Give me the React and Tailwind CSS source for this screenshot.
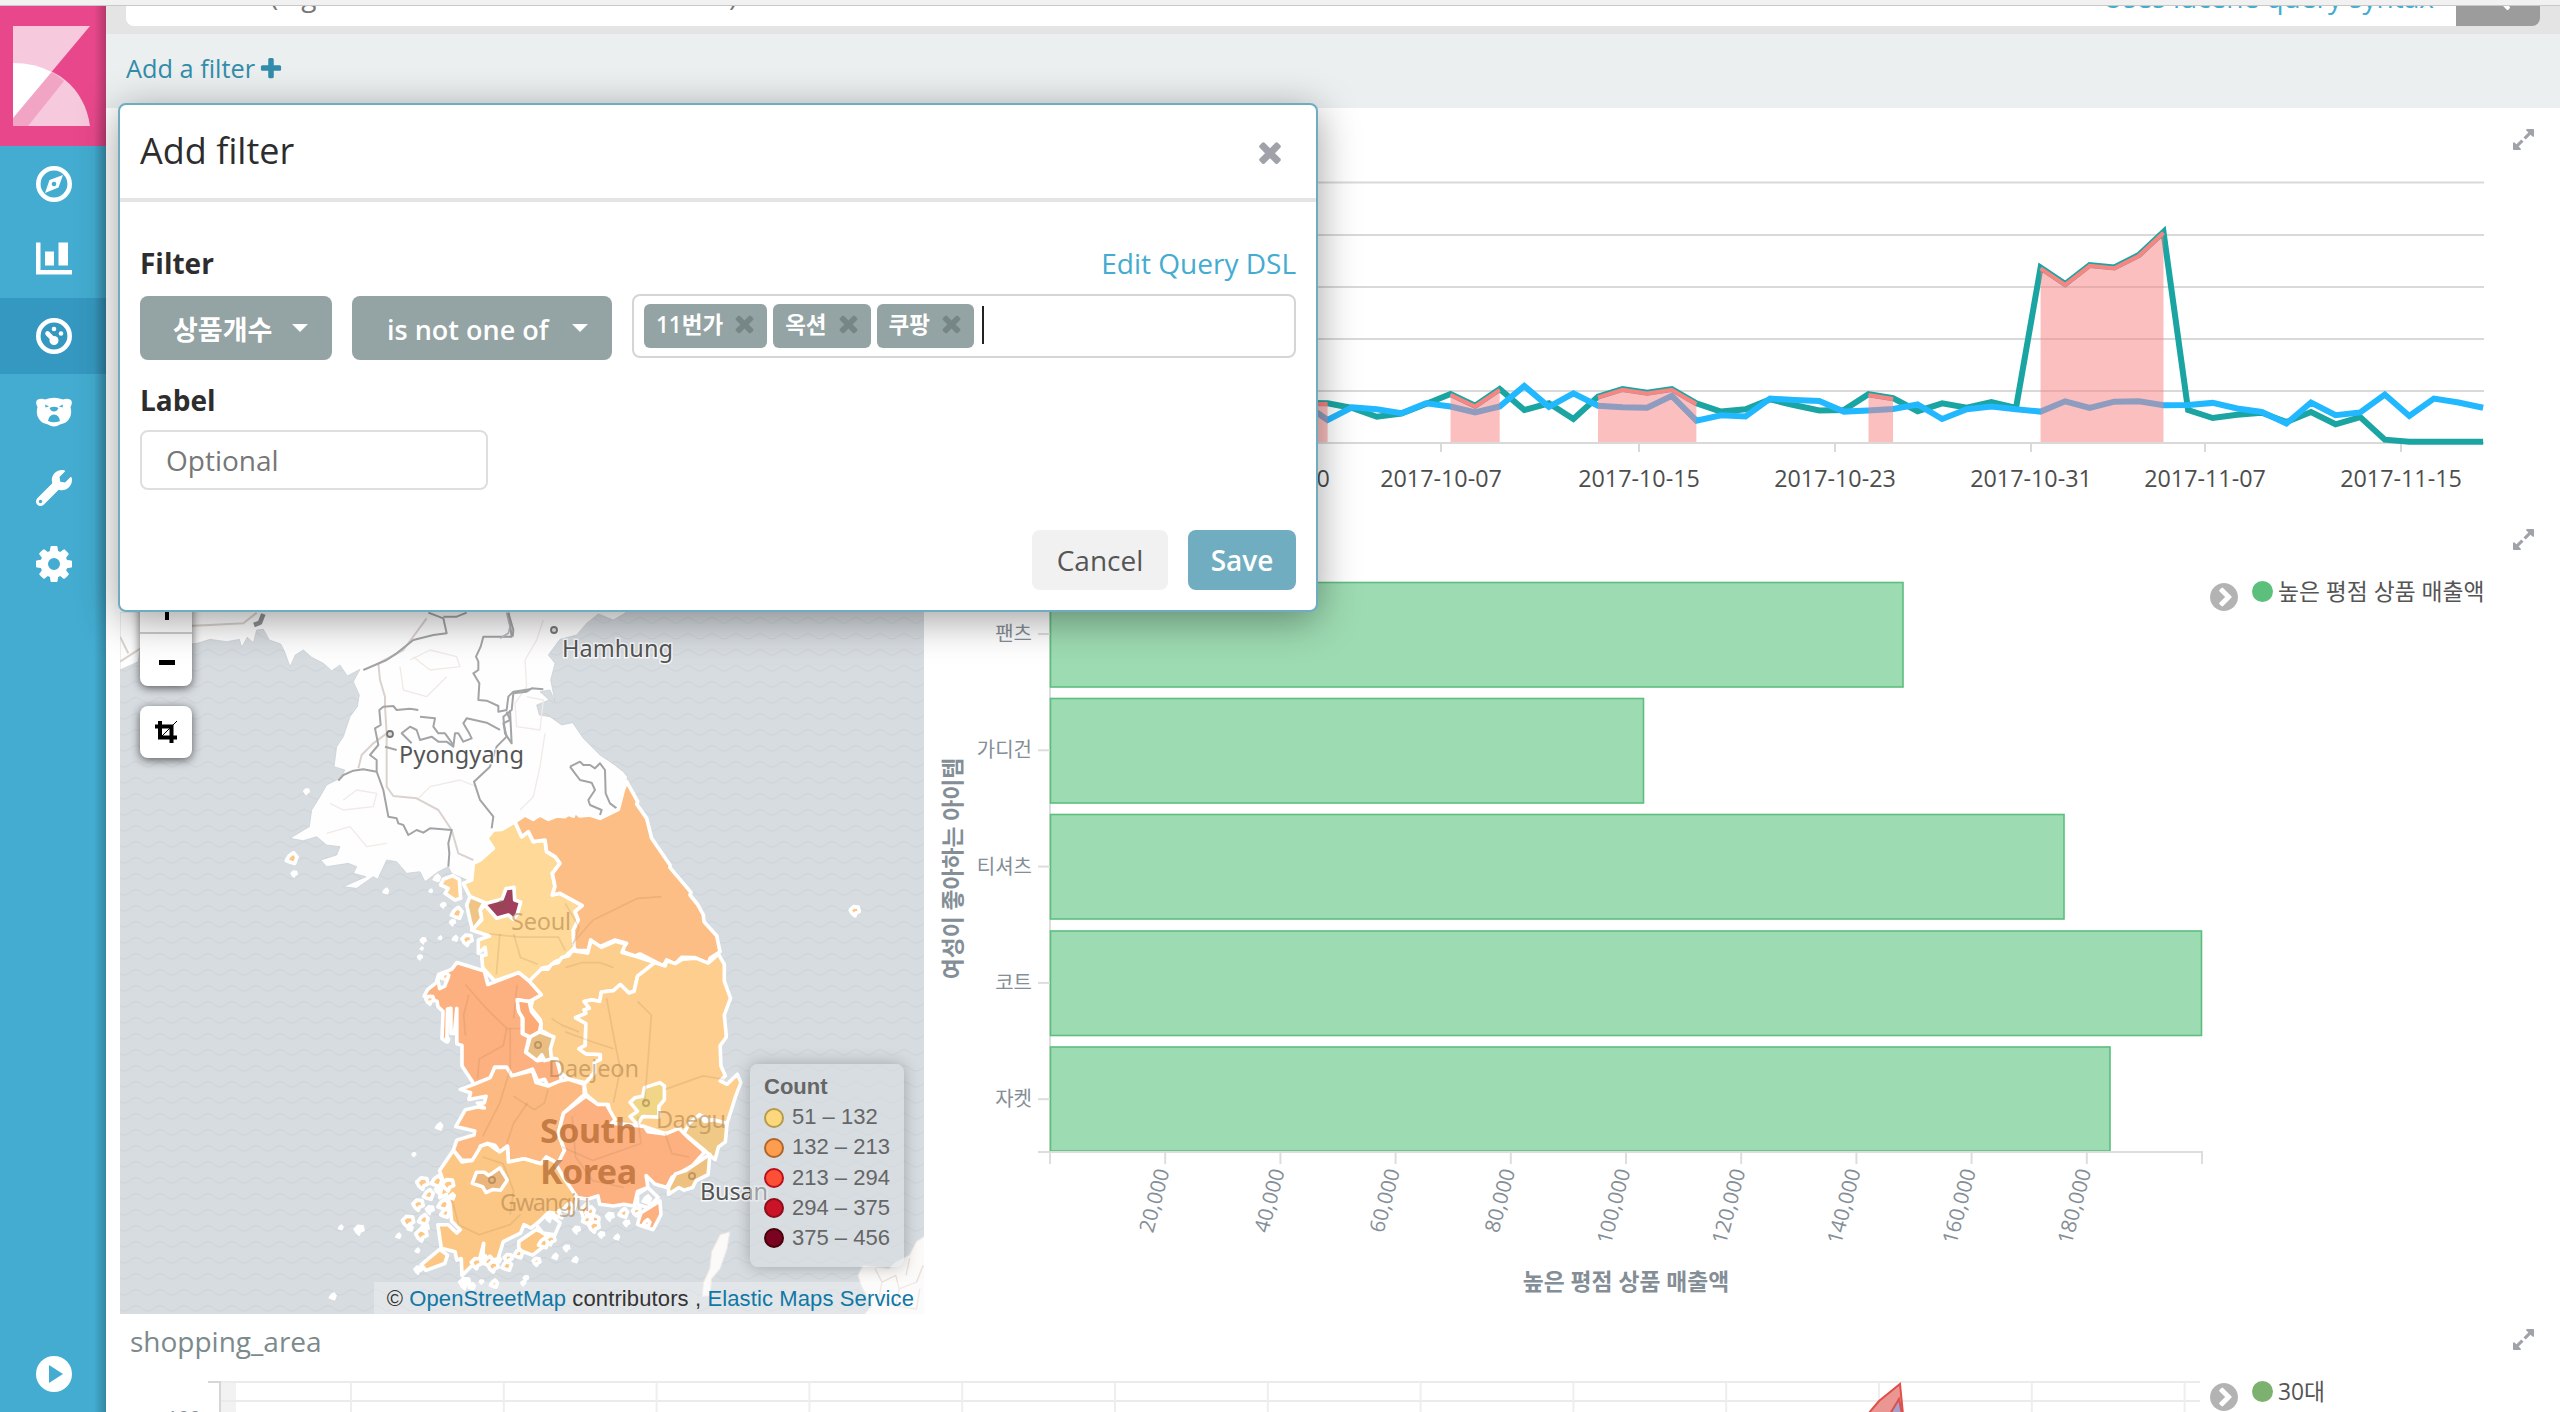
import React from "react";
import { FaWrench, FaSearch } from "react-icons/fa";

const FA = {
  times:
    "M1490 1322q0 40-28 68l-136 136q-28 28-68 28t-68-28l-294-294-294 294q-28 28-68 28t-68-28l-136-136q-28-28-28-68t28-68l294-294-294-294q-28-28-28-68t28-68l136-136q28-28 68-28t68 28l294 294 294-294q28-28 68-28t68 28l136 136q28 28 28 68t-28 68l-294 294 294 294q28 28 28 68z",
  plus:
    "M1600 736v192q0 40-28 68t-68 28h-416v416q0 40-28 68t-68 28h-192q-40 0-68-28t-28-68v-416h-416q-40 0-68-28t-28-68v-192q0-40 28-68t68-28h416v-416q0-40 28-68t68-28h192q40 0 68 28t28 68v416h416q40 0 68 28t28 68z",
  expand:
    "M883 1056q0 13-10 23l-332 332 144 144q19 19 19 45t-19 45-45 19h-448q-26 0-45-19t-19-45v-448q0-26 19-45t45-19 45 19l144 144 332-332q10-10 23-10t23 10l114 114q10 10 10 23zm781-864v448q0 26-19 45t-45 19-45-19l-144-144-332 332q-10 10-23 10t-23-10l-114-114q-10-10-10-23t10-23l332-332-144-144q-19-19-19-45t19-45 45-19h448q26 0 45 19t19 45z",
  chevron:
    "M845 1395l454-454q19-19 19-45t-19-45l-454-454q-19-19-45-19t-45 19l-102 102q-19 19-19 45t19 45l307 307-307 307q-19 19-19 45t19 45l102 102q19 19 45 19t45-19zm819-499q0 209-103 385.5t-279.5 279.5-385.5 103-385.5-103-279.5-279.5-103-385.5 103-385.5 279.5-279.5 385.5-103 385.5 103 279.5 279.5 103 385.5z",
  gear:
    "M1152 896q0-106-75-181t-181-75-181 75-75 181 75 181 181 75 181-75 75-181zm512-109v222q0 12-8 23t-20 13l-185 28q-19 54-39 91 35 50 107 138 10 12 10 25t-9 23q-27 37-99 108t-94 71q-12 0-26-9l-138-108q-44 23-91 38-16 136-29 186-7 28-36 28h-222q-14 0-24.5-8.5t-11.5-21.5l-28-184q-49-16-90-37l-141 107q-10 9-25 9-14 0-25-11-126-114-165-168-7-10-7-23 0-12 8-23 15-21 51-66.5t54-70.5q-27-50-41-99l-183-27q-13-2-21-12.5t-8-23.5v-222q0-12 8-23t19-13l186-28q14-46 39-92-40-57-107-138-10-12-10-24 0-10 9-23 26-36 98.5-107.5t94.5-71.5q13 0 26 10l138 107q44-23 91-38 16-136 29-186 7-28 36-28h222q14 0 24.5 8.5t11.5 21.5l28 184q49 16 90 37l142-107q9-9 24-9 13 0 25 10 129 119 165 170 7 8 7 22 0 12-8 23-15 21-51 66.5t-54 70.5q26 50 41 98l183 28q13 2 21 12.5t8 23.5z",
};

function Glyph({ name, className }) {
  return (
    <svg viewBox="128 128 1536 1536" className={className} fill="currentColor">
      <path d={FA[name]} />
    </svg>
  );
}

/* ---------- sidebar ---------- */

function KibanaMark() {
  return (
    <svg viewBox="0 0 77 100" className="h-[100px] w-[77px]">
      <path d="M0 0H77L0 92Z" fill="#f6c9dc" />
      <path d="M0 37C42 37 72 62 77 100H0Z" fill="#f6c9dc" />
      <path d="M0 92L38.500 46Q46 50 51 55L15 100H0Z" fill="#f2a4c5" />
      <path d="M0 37Q22 37 38.500 46L0 92Z" fill="#fff" />
    </svg>
  );
}

const navIcons = [
  <svg viewBox="0 0 36 36" className="size-9">
    <circle cx="18" cy="18" r="15.700" fill="none" stroke="#fff" strokeWidth="4.600" />
    <path fillRule="evenodd" d="M27 9L22.500 21.500L9 27L13.500 14Z M18 15.700a2.300 2.300 0 1 0 .01 0Z" fill="#fff" />
  </svg>,
  <svg viewBox="0 0 36 36" className="size-9">
    <path d="M0 0.500H4.500V28H36V32.500H0Z M9 9.500H18V23.500H9Z M22.500 0.500H32V23.500H22.500Z" fill="#fff" />
  </svg>,
  <svg viewBox="0 0 36 36" className="size-9">
    <circle cx="18" cy="18" r="15.700" fill="none" stroke="#fff" strokeWidth="4.600" />
    <path d="M11.500 15.500L18 22" stroke="#fff" strokeWidth="4.600" strokeLinecap="round" />
    <circle cx="18" cy="22.500" r="4.500" fill="#fff" />
    <circle cx="18" cy="11" r="2.300" fill="#fff" />
    <circle cx="25" cy="15.500" r="2.300" fill="#fff" />
  </svg>,
  <svg viewBox="0 0 36 36" className="size-9">
    <path d="M1 6Q5 4 9 5.500Q18 2 27 5.500Q31 4 35 6Q37 9 34.500 13Q36.500 20 33 25Q31 29 24 30.500Q18 34.500 12 30.500Q5 29 3 25Q-.5 20 1.500 13Q-1 9 1 6Z" fill="#fff" />
    <path d="M13.500 14Q18 11.500 22.500 14Q21 17.500 18 17.500Q15 17.500 13.500 14Z M12 27Q13 20.500 18 20.500Q23 20.500 24 27Q18 29.500 12 27Z M9 10.500L13 12.500L9.500 13.500Z M27 10.500L23 12.500L26.500 13.500Z" fill="#43acd0" />
  </svg>,
  <FaWrench size={36} color="#fff" />,
  <Glyph name="gear" className="size-9 text-white" />,
];

function Sidebar() {
  return (
    <div className="relative flex h-full w-[106px] shrink-0 flex-col bg-[#43acd0]">
      <div className="flex h-[140px] items-start bg-[#e8488b] pt-5 pl-[13px]">
        <KibanaMark />
      </div>
      {navIcons.map((icon, i) => (
        <div key={i} className={`flex h-[76px] items-center pl-9 ${i === 2 ? "bg-[#3598c0]" : ""}`}>
          {icon}
        </div>
      ))}
      <div className="mt-auto mb-5 pl-9">
        <svg viewBox="0 0 36 36" className="size-9">
          <circle cx="18" cy="18" r="18" fill="#fff" />
          <path d="M13 9L27 18L13 27Z" fill="#43acd0" />
        </svg>
      </div>
      <div className="absolute inset-y-0 right-0 w-3 bg-linear-to-l from-black/22 to-transparent" />
    </div>
  );
}

/* ---------- modal ---------- */

function Chip({ label }) {
  return (
    <span className="flex h-11 items-center gap-[10px] rounded-md bg-[#94a3a3] pr-[11px] pb-[2px] pl-3 text-[22.5px] font-semibold text-white">
      {label}
      <Glyph name="times" className="mb-[4px] size-[23px] text-[#768585]" />
    </span>
  );
}

function Dropdown({ label, className }) {
  return (
    <div className={`flex h-16 items-center justify-between rounded-lg bg-[#94a3a3] pt-1 pr-6 text-[27px] font-semibold text-white ${className}`}>
      <span className="whitespace-nowrap">{label}</span>
      <span className="mb-1 border-x-8 border-t-8 border-x-transparent border-t-white" />
    </div>
  );
}

function AddFilterModal() {
  return (
    <div className="absolute top-[97px] left-3 flex h-[509px] w-[1200px] flex-col rounded-lg border-2 border-[#6eadc1] bg-white shadow-[0_8px_40px_rgba(0,0,0,0.38)]">
      <div className="flex h-[97px] items-center justify-between border-b-4 border-[#e4e4e4] pr-[32px] pl-5">
        <h2 className="-mt-px text-[36px] text-[#2d2d2d]">Add filter</h2>
        <Glyph name="times" className="size-7 text-[#9fa3a9]" />
      </div>
      <div className="flex items-baseline justify-between px-5 pt-[40px] text-[28px] leading-[42px]">
        <span className="font-bold text-[#2d2d2d]">Filter</span>
        <span className="text-[#43acd0]">Edit Query DSL</span>
      </div>
      <div className="flex gap-5 px-5 pt-[10px]">
        <Dropdown label="상품개수" className="mt-[2px] w-[192px] pl-[33px]" />
        <Dropdown label="is not one of" className="mt-[2px] w-[260px] pl-[35px]" />
        <div className="flex h-16 flex-1 items-start gap-[6px] rounded-lg border-2 border-[#d5d5d5] pt-2 pl-[10px]">
          <Chip label="11번가" />
          <Chip label="옥션" />
          <Chip label="쿠팡" />
          <span className="mt-[2px] ml-[2px] h-[38px] w-[2px] bg-[#222]" />
        </div>
      </div>
      <div className="px-5 pt-[19px] text-[28px] leading-[42px] font-bold text-[#2d2d2d]">Label</div>
      <div className="mt-[9px] ml-5 flex h-[60px] w-[348px] items-center rounded-lg border-2 border-[#dedede] pb-px pl-6 text-[28px] text-[#777]">
        Optional
      </div>
      <div className="mt-auto mb-5 flex justify-end gap-5 pr-5 text-[28px]">
        <div className="flex h-[60px] w-[136px] items-center justify-center rounded-lg bg-[#f1f1f1] text-[#555]">Cancel</div>
        <div className="flex h-[60px] w-[108px] items-center justify-center rounded-lg bg-[#70adc1] font-semibold text-white">Save</div>
      </div>
    </div>
  );
}

/* ---------- line chart ---------- */

const X0 = 1327.6;
const STEP = 24.585;
const teal = [403, 403.3, 408, 416.8, 413.6, 404, 394, 405.7, 389, 410, 403.3, 419, 396.6, 389, 392.6, 389, 403.3, 411.6, 409.3, 399.4, 405.3, 410.4, 410, 394.2, 398.2, 411.2, 403.3, 407.7, 402, 408, 267.5, 284, 265, 267.5, 255, 232, 410, 418, 414.8, 412.8, 422, 412, 424.3, 417, 439.7, 441.7, 441.7, 441.7, 441.7];
const blue = [403, 420, 407.3, 409.3, 413.2, 403.3, 406.5, 412.4, 406.5, 386, 406.9, 393.4, 405.7, 407.3, 407.7, 395.8, 420.7, 415.2, 416.4, 398.6, 400, 401, 411.6, 410.4, 408.9, 404.5, 419, 409.3, 406.5, 409.3, 411.6, 401.3, 408, 401.7, 401.3, 405.3, 404.9, 402.9, 408.5, 412, 423.5, 402.5, 415.2, 412.4, 394.6, 416, 398.6, 402.5, 407.7];
const at = (s, i) => `${(X0 + (i - 1) * STEP).toFixed(1)},${s[i]}`;
const line = (s) => s.map((_, i) => at(s, i)).join(" ");
const anomalies = [[0, 1], [6, 8], [12, 16], [23, 24], [30, 35]];

function TimeSeries() {
  const ticks = [[1441, "2017-10-07"], [1639, "2017-10-15"], [1835, "2017-10-23"], [2031, "2017-10-31"], [2205, "2017-11-07"], [2401, "2017-11-15"], [1269, "2017-09-30"]];
  return (
    <svg viewBox="106 108 2454 392" className="block h-[392px] w-[2454px]">
      {[182.500, 235, 287, 339, 391, 443].map((y) => (
        <line key={y} x1="140" x2="2484" y1={y} y2={y} stroke="#d9d9d9" strokeWidth="2" />
      ))}
      {ticks.map(([x, t]) => (
        <g key={t}>
          <line x1={x} x2={x} y1="443" y2="452" stroke="#d9d9d9" strokeWidth="2" />
          <text x={x} y="486.500" textAnchor="middle" fontSize="23.300" fill="#4d4d4d">{t}</text>
        </g>
      ))}
      <polyline points={line(teal)} fill="none" stroke="#1aa5a2" strokeWidth="6" />
      <polyline points={line(blue)} fill="none" stroke="#22b8ff" strokeWidth="6" />
      {anomalies.map(([a, b]) => {
        const idx = Array.from({ length: b - a + 1 }, (_, k) => a + k);
        const top = idx.map((i) => at(teal, i)).join(" ");
        const xa = X0 + (a - 1) * STEP;
        const xb = X0 + (b - 1) * STEP;
        return (
          <g key={a}>
            <polygon points={`${xa},442 ${top} ${xb},442`} fill="#f98080" fillOpacity="0.5" />
            <polyline points={top} fill="none" stroke="#f98583" strokeWidth="4" transform="translate(0 .8)" />
          </g>
        );
      })}
    </svg>
  );
}

/* ---------- map ---------- */

const provinces = [
  ["#fdcf8f", "500,150 545,157 555,120 585,140 625,122 655,130 645,155 680,165 740,185 690,225 680,270 665,275 640,250 620,268 585,272 580,300 558,295 535,300 550,320 535,325 540,335 510,348 540,365 538,430 520,440 540,455 582,457 582,472 565,480 565,510 540,540 490,530 465,510 455,470 430,465 445,405 410,385 408,355 380,320 385,295 410,280 375,240 410,205 430,205 440,190 460,185 470,170 490,165"],
  ["#fdb180", "165,185 245,210 255,250 345,215 375,240 410,280 385,295 375,300 340,295 345,330 355,345 355,395 375,405 365,450 400,475 430,470 455,470 465,510 470,540 430,550 420,530 400,535 385,500 325,520 310,495 275,495 265,525 215,545 180,490 180,430 165,425 165,320 158,395 148,395 148,320 138,322 136,420 122,410 125,330 110,315 108,300 70,285 80,265 105,245 112,220 150,205"],
  ["#fcab77", "340,295 375,300 382,330 410,365 405,390 378,405 357,395 357,350 345,330"],
  ["#e9be83", "366,450 378,405 405,390 447,405 437,440 440,470 420,475 412,458 398,475"],
  ["#fcba82", "215,545 262,525 275,495 310,495 325,520 385,505 395,540 430,550 465,535 490,530 535,545 535,575 475,630 460,690 478,740 460,780 425,760 410,780 360,765 315,775 312,728 290,745 275,725 255,720 233,728 230,745 210,770 180,770 155,740 165,710 215,695 217,683 162,670 190,620 225,612 245,615 225,600 245,600 250,580 200,590 205,570 175,560"],
  ["#fcc785", "155,740 180,775 210,770 235,728 255,720 290,745 312,728 315,775 360,765 410,780 425,760 460,780 475,820 515,880 505,915 480,910 460,920 470,940 440,930 405,950 380,970 360,960 350,985 300,1010 285,1060 255,1070 240,1065 243,1015 232,1060 205,1085 180,1110 178,1060 165,1065 160,1040 120,1030 110,960 140,960 165,985 175,975 150,950 145,900 135,870 115,880 125,830 115,800"],
  ["#eab67d", "210,838 222,805 245,805 258,815 290,792 312,828 292,858 270,856 250,865 240,848"],
  ["#fdce8e", "740,185 770,195 775,180 800,188 820,175 860,172 895,187 925,160 942,190 942,240 960,290 942,340 948,405 930,430 932,490 945,520 930,535 950,545 980,515 990,540 975,580 950,660 910,655 870,635 825,685 770,690 710,670 640,665 615,660 605,605 575,605 540,575 535,545 565,510 565,480 582,472 582,457 540,455 520,440 538,430 540,365 510,348 540,335 535,325 550,320 535,300 558,295 580,300 585,272 620,268 640,250 665,275 680,270 690,225"],
  ["#fdb180", "540,580 575,605 600,605 625,650 615,660 670,665 710,670 720,685 770,692 810,675 840,705 885,745 850,785 790,820 775,850 740,840 715,815 720,850 690,862 680,905 650,900 620,905 580,900 575,875 545,885 515,880 475,820 455,785 478,740 460,690 475,630"],
  ["#f1c987", "825,690 840,660 870,635 885,655 910,650 950,660 945,715 925,730 915,768 890,745"],
  ["#efc180", "780,850 800,810 830,800 900,752 895,812 860,830 850,850 825,858 810,850 780,870"],
  ["#f1d687", "682,585 705,580 710,555 755,540 768,550 768,590 752,610 752,642 705,640 690,665 668,640 690,625 668,598"],
  ["#fdb180", "700,925 755,890 758,930 735,975 690,960 695,940"],
  ["#fcc785", "345,1010 395,975 420,985 430,1015 385,1050 345,1035"],
  ["#fcc785", "62,1078 115,1033 138,1050 130,1075 75,1095"],
];

const north = [
  ["#fed998", "1215,665 1235,710 1255,695 1270,725 1305,720 1310,755 1335,770 1350,790 1327,820 1335,860 1327,885 1350,880 1417,917 1395,935 1405,960 1390,990 1392,1045 1360,1075 1335,1085 1320,1100 1295,1105 1290,1125 1257,1143 1226,1118 1154,1143 1118,1103 1115,1067 1128,1065 1125,1042 1105,1060 1105,1020 1138,1008 1085,990 1115,960 1110,930 1130,910 1080,890 1060,850 1085,840 1090,790 1110,780 1150,745 1130,715 1150,690 1175,688"],
  ["#fcbe84", "1215,665 1245,645 1270,658 1290,645 1315,658 1340,648 1365,650 1375,642 1390,648 1395,635 1410,648 1440,645 1470,655 1525,628 1540,570 1550,545 1583,605 1580,612 1610,655 1625,715 1680,795 1680,803 1743,877 1740,885 1762,912 1780,945 1782,965 1820,1007 1830,1055 1800,1075 1795,1092 1755,1073 1715,1072 1695,1092 1670,1080 1660,1098 1625,1080 1590,1062 1575,1068 1530,1052 1550,1030 1515,1020 1470,1040 1442,1020 1435,1052 1400,1052 1392,1045 1390,990 1405,960 1395,935 1417,917 1350,880 1327,885 1335,860 1327,820 1350,790 1335,770 1310,755 1305,720 1270,725 1255,695 1235,710"],
  ["#efc485", "1080,890 1122,907 1110,930 1115,955 1088,990 1080,960 1070,915"],
  ["#fdcf90", "1000,838 1028,827 1048,838 1052,895 1035,900 1005,880 1015,865 992,855"],
  ["#a0405d", "1122,912 1155,903 1176,898 1188,866 1212,862 1214,900 1232,906 1222,942 1210,958 1195,945 1160,955"],
];

const landNorth =
  "30,36 30,210 85,185 90,150 262,130 300,118 350,125 388,118 395,142 412,112 430,128 440,90 460,88 478,120 512,132 524,155 540,200 556,165 580,150 605,172 640,190 665,212 690,195 712,228 750,208 730,245 748,285 742,320 720,350 700,410 680,440 672,500 705,510 690,535 650,555 630,590 605,630 598,680 540,715 580,722 620,710 650,735 690,740 680,765 632,780 650,800 715,790 740,800 730,820 768,830 700,860 740,865 790,830 803,838 830,780 860,785 890,820 930,815 945,845 985,815 1015,800 1025,820 1070,840 1100,860 1180,800 1300,720 1500,660 1550,600 1552,530 1540,515 1510,492 1470,465 1420,415 1388,368 1355,375 1320,350 1288,345 1280,315 1318,300 1290,275 1320,270 1335,305 1322,240 1335,190 1315,165 1350,118 1400,105 1430,70 1465,42 1510,60 1545,40 1560,20";

const borders = [
  "955,38 1000,55 1010,100 970,105 910,120 860,160 830,180 760,210",
  "1000,50 1040,50 1070,38",
  "1195,38 1205,110 1120,110 1112,140 1098,170 1105,185 1105,210 1090,220 1108,250 1105,300 1130,302 1165,318 1165,335 1190,330 1195,290 1210,275 1260,268",
  "1190,335 1200,360 1180,370 1190,410 1160,440 1140,500 1092,545 1110,600 1150,650 1145,685",
  "1170,390 1130,368 1070,355 1060,370 1075,395 1085,415 1060,425 1045,400 1035,400 1030,440 1010,425 985,425 965,410 930,420 920,390 900,380 875,400 905,430",
  "930,350 975,355 970,380 985,400 1005,400 1030,435",
  "925,330 900,326 860,330 850,318 820,320 808,330 812,375 795,385 805,435 780,465 800,480 800,515 820,570 835,650 860,655 865,670 880,675 895,705 920,690 940,698 960,685 1025,690 1015,730 1018,760 1015,800",
  "800,515 760,508 730,512 700,525 685,542",
  "825,440 860,450",
  "1195,38 1210,90 1208,110",
  "1200,330 1205,430 1185,400 1180,350 1205,330 1210,280 1250,275 1265,265 1300,268",
  "1380,500 1410,485 1420,495 1440,495 1455,505 1470,490 1485,510 1487,580 1500,610 1520,625",
  "1380,500 1395,520 1410,540 1445,548 1455,570 1435,600 1440,615 1475,630 1470,645",
];
const roads = [
  "30,185 100,140 180,80 300,75 400,70 440,38",
  "30,110 55,160",
  "950,55 880,150 805,190 810,240 825,290 825,320 830,400 830,560 850,588 920,595 985,630 1025,690 1045,760 1090,780",
  "745,505 755,465 790,430 830,400",
];
const faint = [
  "900,180 960,150 1040,170 1050,200 960,210 910,170",
  "870,200 880,270 950,290 1010,230",
  "700,600 740,570 800,580 790,620 700,630 660,610",
  "1300,60 1280,120 1245,180 1250,260 1215,310 1220,380 1290,390 1300,300 1250,290",
  "1305,400 1290,500 1270,590 1230,630",
  "650,700 720,680 770,740 830,730",
  "920,600 960,560 1050,540 1100,560",
];
const inlandRoads = [
  "190,250 250,320 310,380 350,380", "310,380 300,430 230,470 225,530", "320,380 320,500 290,600 240,700",
  "200,280 185,340 190,400", "330,350 340,250", "330,580 390,620 420,600 430,560", "440,350 470,370 520,390",
  "480,200 530,185 580,185 620,200", "600,290 620,400 640,500 620,600", "690,300 730,340 720,480 710,600",
  "500,130 560,60 690,-5 760,-10", "500,140 520,80 480,10", "620,440 560,420 480,390", "770,560 880,520 940,530",
  "150,880 170,960 230,990 320,960 350,930", "240,760 300,780 330,860 320,930", "470,730 560,770 700,720 690,640",
  "500,640 510,760 560,830 650,850", "260,100 350,110 460,110 480,150", "290,100 280,220", "330,100 350,170 400,190",
  "770,690 790,750 840,760", "370,600 330,660 310,720",
];

const cities = [
  ["Hamhung", 562, 656.5, 111, 554, 630, "#555"],
  ["Pyongyang", 399, 762.5, 125, 390, 734, "#555"],
];
const inland = [
  ["Seoul", 511, 929.5, 60, 502, 904],
  ["Daejeon", 548, 1077, 91, 538, 1045],
  ["Daegu", 656, 1128, 70, 646, 1103],
  ["Gwangju", 500, 1211, 90, 492, 1180],
];

const islands = [
  [545, 776, 20, 1], [553, 822, 11, 0], [827, 874, 11, 0], [590, 575, 10, 0], [980, 835, 14, 0], [1000, 916, 10, 0], [1040, 940, 20, 1],
  [1028, 968, 11, 0], [962, 873, 7, 0], [940, 1022, 11, 0], [935, 1046, 6, 0], [930, 1072, 9, 0], [1035, 1016, 11, 0], [1072, 1020, 18, 1],
  [990, 1014, 7, 0], [2235, 933, 16, 1], [987, 1580, 14, 0], [912, 1664, 7, 0], [692, 1883, 9, 0], [748, 1890, 18, 0], [668, 2090, 13, 0],
  [938, 1750, 20, 1], [980, 1745, 20, 1], [1015, 1755, 20, 1], [955, 1785, 18, 1], [925, 1815, 18, 1], [1000, 1815, 20, 1], [895, 1865, 20, 1],
  [940, 1860, 18, 1], [935, 1905, 20, 1], [865, 1908, 10, 0], [960, 1830, 16, 0], [1005, 1840, 16, 1], [925, 2010, 15, 0], [922, 1952, 9, 0],
  [945, 1885, 16, 0], [900, 1885, 12, 0], [985, 1770, 14, 0], [1025, 1790, 14, 0], [1120, 1975, 14, 0], [1165, 1980, 12, 0],
  [1065, 2050, 22, 0], [1085, 2060, 14, 0], [1115, 2046, 8, 0], [1152, 2052, 13, 1], [1100, 1990, 18, 1], [1135, 1985, 18, 1], [1150, 2000, 18, 1],
  [1190, 1998, 18, 1], [1195, 1975, 14, 1], [1225, 1962, 16, 1], [1248, 2035, 10, 0], [1300, 1930, 18, 1], [1322, 1920, 16, 1], [1335, 1970, 12, 0],
  [1370, 1945, 12, 0], [1395, 1980, 12, 0], [1400, 1890, 14, 0], [1430, 1860, 16, 1], [1453, 1880, 18, 1], [1440, 1835, 16, 1], [1320, 1850, 20, 0],
  [1375, 1825, 18, 1], [1500, 1850, 16, 0], [1520, 1912, 11, 0], [1550, 1870, 12, 0], [1540, 1840, 16, 1], [1580, 1835, 14, 1], [1610, 1800, 18, 0],
  [1475, 1905, 12, 0], [1610, 1870, 12, 1], [1240, 2050, 9, 0], [1005, 1130, 14, 1], [960, 1200, 14, 1], [1010, 1320, 12, 0], [1280, 1985, 12, 1],
];
const shapeA = [[-1, -0.2], [-0.3, -0.9], [0.7, -0.8], [0.9, 0.1], [0.2, 0.4], [0, 1], [-0.6, 0.5]];
const shapeB = [[-0.9, 0.3], [-0.4, -0.5], [0.3, -1], [0.9, -0.3], [0.5, 0.8], [-0.2, 0.6]];

function KoreaMap() {
  return (
    <svg viewBox="120 580 804 734" className="block h-[734px] w-[804px]">
      <defs>
        <pattern id="waves" width="24" height="16" patternUnits="userSpaceOnUse" x="4" y="6">
          <path d="M0 9L3 8.500L9 4.500Q12 2.500 15 4.500L21 8.500L24 9" fill="none" stroke="#cfd5da" strokeWidth="1.300" />
        </pattern>
        <filter id="soft" x="-5%" y="-5%" width="110%" height="110%">
          <feGaussianBlur stdDeviation="0.6" />
        </filter>
      </defs>
      <rect x="120" y="580" width="804" height="734" fill="#d7dce0" />
      <rect x="120" y="580" width="804" height="734" fill="url(#waves)" />
      <g transform="translate(110 600) scale(.33333)" strokeLinejoin="round">
        <polygon points={landNorth} fill="#fefefe" stroke="#c5ccd2" strokeWidth="2" />
        <path d="M30 -60H1560V36H30Z" fill="#fefefe" />
        <g fill="none" filter="url(#soft)">
          {faint.map((p) => <polyline key={p} points={p} stroke="#f1eae6" strokeWidth="4" />)}
          {roads.map((p) => <polyline key={p} points={p} stroke="#dbd2ce" strokeWidth="6" />)}
          {borders.map((p) => <polyline key={p} points={p} stroke="#a3a4a6" strokeWidth="6" />)}
          <path d="M432 75L450 68L460 42" stroke="#8e9093" strokeWidth="14" />
          <path d="M1170 115L1195 100L1200 80L1190 38" stroke="#b9babc" strokeWidth="5" />
        </g>
        <g stroke="#fff" strokeWidth="11">
          {north.map(([c, p]) => <polygon key={p} points={p} fill={c} />)}
        </g>
      </g>
      <g transform="translate(400 900) scale(.34428 .33818)" strokeLinejoin="round">
        <g fill="#fbfaf9" stroke="#ece9e7" strokeWidth="3">
          <polygon points="930,990 958,982 950,1030 930,1090 905,1120 900,1170 878,1172 882,1130 900,1090 905,1040" />
          <polygon points="1330,1110 1345,1080 1420,1090 1440,1070 1480,1050 1500,1010 1530,990 1530,1250 1330,1250 1370,1200 1340,1140" />
        </g>
        <path d="M1380 1090L1400 1130L1440 1110L1450 1150L1500 1130L1520 1080M1400 1130L1390 1180L1440 1200L1450 1150M1440 1200L1500 1210L1510 1150M1480 1060L1470 1110" fill="none" stroke="#e9e0db" strokeWidth="4" />
        <g stroke="#fff" strokeWidth="10.500">
          {provinces.map(([c, p]) => <polygon key={p} points={p} fill={c} />)}
          <polygon points="395,960 430,925 465,955 450,990 415,985" fill="#d7dce0" />
          <polygon points="690,870 720,850 750,880 720,910 690,900" fill="#d7dce0" />
          <polygon points="525,915 545,895 550,940 535,950" fill="#fdb180" />
          <polygon points="560,930 578,940 575,970 555,972" fill="#fdb180" />
          <polygon points="110,235 125,215 140,225 130,255 115,262" fill="#d7dce0" />
        </g>
        <g fill="none" stroke="#a8794a" strokeOpacity="0.18" strokeWidth="5">
          {inlandRoads.map((p) => <polyline key={p} points={p} />)}
        </g>
      </g>
      <g transform="translate(110 600) scale(.33333)" strokeLinejoin="round" stroke="#fff">
        {islands.map(([x, y, r, land], i) => (
          <polygon
            key={i}
            points={(i % 2 ? shapeA : shapeB).map(([a, b]) => `${x + a * r * 0.9},${y + b * r * 0.9}`).join(" ")}
            fill={land ? "#fcc785" : "#fff"}
            strokeWidth={land ? 11 : 4}
          />
        ))}
      </g>
      <g fontFamily="'Noto Sans', sans-serif" fontSize="23.500">
        {cities.map(([t, x, y, w, cx, cy, c]) => (
          <g key={t}>
            <circle cx={cx} cy={cy} r="3" fill="#ddd" stroke="#777" strokeWidth="1.800" />
            <text x={x} y={y} textLength={w} fill={c} stroke="#fff" strokeOpacity="0.8" strokeWidth="3" paintOrder="stroke">{t}</text>
          </g>
        ))}
        {inland.map(([t, x, y, w, cx, cy]) => (
          <g key={t} fillOpacity="0.55">
            <circle cx={cx} cy={cy} r="3" fill="none" stroke="#7a5a35" strokeOpacity="0.4" strokeWidth="2" />
            <text x={x} y={y} textLength={w} fill="#a87c48">{t}</text>
          </g>
        ))}
        <circle cx="692" cy="1176" r="3" fill="none" stroke="#7a5a35" strokeOpacity="0.4" strokeWidth="2" />
        <text x="700" y="1200" textLength="68" fill="#555" stroke="#fff" strokeOpacity="0.8" strokeWidth="3" paintOrder="stroke">Busan</text>
        <g fontSize="34" fontWeight="700" fill="#b2662e" fillOpacity="0.72">
          <text x="540" y="1142.500" textLength="97">South</text>
          <text x="540" y="1184" textLength="97">Korea</text>
        </g>
      </g>
    </svg>
  );
}

const buckets = [
  ["51 – 132", "bg-[#fdd77c] border-[#b59b4c]"],
  ["132 – 213", "bg-[#fc9d4f] border-[#b0662a]"],
  ["213 – 294", "bg-[#fc4f35] border-[#b8101c]"],
  ["294 – 375", "bg-[#cb1328] border-[#8c0c1a]"],
  ["375 – 456", "bg-[#7a0322] border-[#470008]"],
];

function MapPanel() {
  return (
    <div className="relative mt-20 ml-[14px] h-[734px] w-[804px] shrink-0 overflow-hidden font-['Liberation_Sans',Arial,sans-serif]">
      <KoreaMap />
      <div className="absolute top-0 left-5 flex flex-col gap-5">
        <div className="h-[106px] w-[52px] rounded-lg bg-white shadow-[0_2px_10px_rgba(0,0,0,0.6)]">
          <div className="relative h-[54px] border-b-2 border-[#ccc]">
            <span className="absolute bottom-[20px] left-[17px] h-1 w-[20px] bg-black" />
            <span className="absolute bottom-[12px] left-[25px] h-[20px] w-1 bg-black" />
          </div>
          <div className="flex h-[52px] items-center justify-center pt-1 pl-[2px]">
            <span className="h-[5px] w-4 bg-black" />
          </div>
        </div>
        <div className="flex size-[52px] items-center justify-center rounded-lg bg-white shadow-[0_2px_10px_rgba(0,0,0,0.6)]">
          <svg viewBox="0 0 22 22" className="size-[22px]">
            <path d="M5 0V16.500H22M0 5.500H16.500V22" fill="none" stroke="#000" strokeWidth="4" />
            <path d="M6 16L22 0" stroke="#000" strokeWidth="1" />
          </svg>
        </div>
      </div>
      <div className="absolute right-5 bottom-[47px] flex h-[203px] w-[154px] flex-col rounded-lg bg-[#d9dee2]/55 pt-[8px] pl-[14px] text-[22px] leading-[30.400px] text-[#666] shadow-[0_0_16px_rgba(0,0,0,0.25)]">
        <div className="font-bold">Count</div>
        {buckets.map(([label, tone]) => (
          <div key={label} className="flex h-[30.200px] items-center gap-2 whitespace-nowrap">
            <span className={`size-5 rounded-full border-2 ${tone}`} />
            {label}
          </div>
        ))}
      </div>
      <div className="absolute right-0 bottom-0 flex h-8 w-[550px] items-center justify-end bg-white/30 pr-[10px] text-[22px] tracking-[0.12px] whitespace-pre text-[#333]">
        © <span className="text-[#0f78a5]">OpenStreetMap</span> contributors , <span className="text-[#0f78a5]">Elastic Maps Service</span>
      </div>
    </div>
  );
}

/* ---------- bar chart ---------- */

const bars = [
  ["팬츠", 582.5, 1903],
  ["가디건", 698.5, 1643.5],
  ["티셔츠", 814.5, 2064],
  ["코트", 931, 2201.5],
  ["자켓", 1047, 2110],
];

function BarChart() {
  return (
    <svg viewBox="924 500 1260 814" className="block h-[814px] w-[1260px] overflow-visible" fill="#848e96">
      <path d="M1050 560V1164M1038 1152H2203M2202 1152V1164" stroke="#ddd" strokeWidth="2" fill="none" />
      {bars.map(([label, y, x2], i) => (
        <g key={label}>
          <rect x="1050.500" y={y} width={x2 - 1050.5} height={i === 4 ? 104 : 104.5} fill="#9ddbb2" stroke="#5cbf7e" strokeWidth="1.600" />
          <line x1="1038" x2="1050" y1={634 + i * 116.3} y2={634 + i * 116.3} stroke="#ddd" strokeWidth="2" />
          <text x="1032" y={641 + i * 116.3} textAnchor="end" fontSize="20">{label}</text>
        </g>
      ))}
      <line x1="1050" x2="2203" y1="1152" y2="1152" stroke="#ddd" strokeWidth="2" />
      {[1, 2, 3, 4, 5, 6, 7, 8, 9].map((k) => {
        const x = 1050 + k * 115.2;
        return (
          <g key={k}>
            <line x1={x} x2={x} y1="1152" y2="1164" stroke="#ddd" strokeWidth="2" />
            <text transform={`translate(${x + 4.5} 1171) rotate(-75)`} textAnchor="end" fontSize="20.800">{`${k * 20},000`}</text>
          </g>
        );
      })}
      <text transform="translate(961 868.500) rotate(-90)" textAnchor="middle" fontSize="22.800" fontWeight="700">여성이 좋아하는 아이템</text>
      <text x="1626" y="1290" textAnchor="middle" fontSize="22.800" fontWeight="700">높은 평점 상품 매출액</text>
    </svg>
  );
}

function Legend({ label, dot, className }) {
  return (
    <div className={`absolute left-[2104px] flex items-start whitespace-nowrap text-[#555] ${className}`}>
      <Glyph name="chevron" className="mt-[2px] size-7 text-[#b3b3b3]" />
      <span className={`ml-[14px] size-[21px] rounded-full ${dot}`} />
      <span className="ml-[5px] text-[22.8px] leading-[22px]">{label}</span>
    </div>
  );
}

function Expand({ className }) {
  return <Glyph name="expand" className={`absolute right-[26px] size-[21px] text-[#9fa3a9] ${className}`} />;
}

function AreaChart() {
  return (
    <svg viewBox="106 1314 2100 98" className="block h-[98px] w-[2100px]">
      <rect x="221" y="1383" width="15" height="29" fill="#f2f2f2" />
      <path d="M220 1382H2200M220 1401H2200" stroke="#ebebeb" strokeWidth="2" />
      {Array.from({ length: 13 }, (_, i) => (
        <line key={i} x1={351 + i * 152.8} x2={351 + i * 152.8} y1="1382" y2="1412" stroke="#eee" strokeWidth="2" />
      ))}
      <path d="M208 1382H220V1412" fill="none" stroke="#d6d6d6" strokeWidth="2" />
      <polygon points="1868,1414 1879,1401 1900,1384 1903,1414" fill="#ea9692" stroke="#df4f4b" strokeWidth="2" />
      <polygon points="1890,1414 1899,1399 1902,1414" fill="#a5a0cc" stroke="#df4f4b" strokeWidth="2" />
      <text x="130" y="1352" fontSize="28" fill="#7b8a8b">shopping_area</text>
      <text x="201" y="1425" fontSize="20" textAnchor="end" fill="#848e96">100</text>
    </svg>
  );
}

export default function App() {
  return (
    <div className="flex h-[1412px] w-[2560px] flex-col overflow-hidden bg-white font-['Open_Sans','Noto_Sans_CJK_KR',sans-serif]">
      <div className="h-[6px] shrink-0 border-b border-[#c8c8c8] bg-[#f1f1f1]" />
      <div className="flex h-[1406px]">
        <Sidebar />
        <div className="relative flex w-[2454px] flex-col">
          <div className="flex h-7 shrink-0 overflow-hidden bg-[#e4e4e4] pr-5 pb-2 pl-5">
            <div className="flex flex-1 justify-between overflow-hidden rounded-bl-lg bg-white pr-[22px] pl-[26px] text-[28px] leading-[38px] whitespace-nowrap">
              <span className="-mt-[30px] text-[#777]">Search... (e.g. status:200 AND extension:PHP)</span>
              <span className="-mt-[28px] text-[#43acd0]">Uses lucene query syntax</span>
            </div>
            <div className="flex w-[84px] justify-center overflow-hidden rounded-br-lg bg-[#9c9c9c]">
              <FaSearch size={24} color="#fff" className="-mt-5" />
            </div>
          </div>
          <div className="flex h-[74px] shrink-0 items-center gap-[5px] bg-[#ebeff0] pb-1 pl-5 text-[25.3px] text-[#328caa]">
            Add a filter
            <Glyph name="plus" className="size-[22px]" />
          </div>
          <div className="relative h-[392px] shrink-0">
            <TimeSeries />
            <Expand className="top-[21px]" />
          </div>
          <div className="relative flex h-[814px] shrink-0">
            <MapPanel />
            <BarChart />
            <Expand className="top-[29px]" />
            <Legend label="높은 평점 상품 매출액" dot="bg-[#5cbf7b]" className="top-[81px]" />
          </div>
          <div className="relative h-[98px] shrink-0">
            <AreaChart />
            <Expand className="top-[15px]" />
            <Legend label="30대" dot="bg-[#7db16f]" className="top-[67px]" />
          </div>
          <AddFilterModal />
        </div>
      </div>
    </div>
  );
}
